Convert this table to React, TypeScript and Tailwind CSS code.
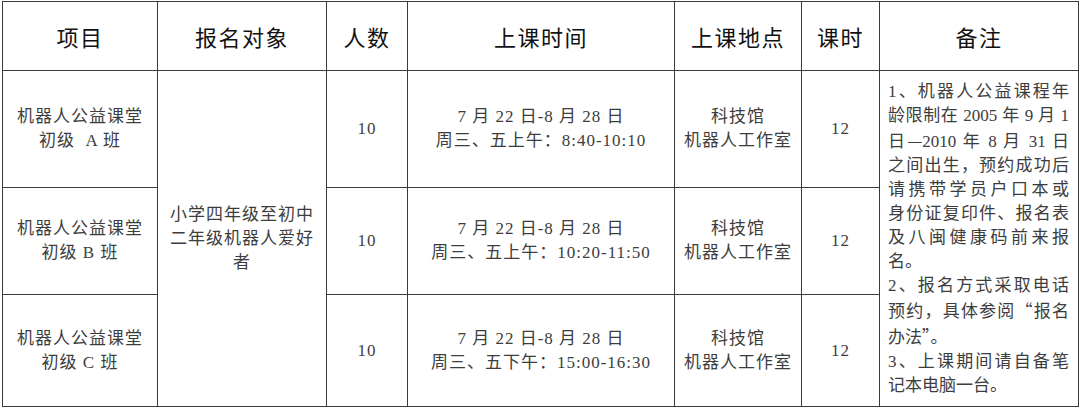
import React from "react";

const serif = "font-['Liberation_Serif','Noto_Sans_CJK_SC',serif]";
const sans = "font-['Noto_Sans_CJK_SC','Liberation_Sans',sans-serif]";

const headers = ["项目", "报名对象", "人数", "上课时间", "上课地点", "课时", "备注"];

const rows = [
  { cls: "初级\u00a0\u00a0A 班", time: "周三、五上午：8:40-10:10", h: "h-[117px]" },
  { cls: "初级 B 班", time: "周三、五上午：10:20-11:50", h: "h-[107px]" },
  { cls: "初级 C 班", time: "周三、五下午：15:00-16:30", h: "h-[112px]" },
];

// [text, justified]
const notes: [React.ReactNode, boolean][] = [
  ["1、机器人公益课程年", true],
  ["龄限制在 2005 年 9 月 1", true],
  [<><span className={sans}>日—</span>2010 年 8 月 31 日</>, true],
  ["之间出生，预约成功后", true],
  ["请携带学员户口本或", true],
  ["身份证复印件、报名表", true],
  ["及八闽健康码前来报", true],
  ["名。", false],
  ["2、报名方式采取电话", true],
  [<>预约，具体参阅<span className={sans}>“</span>报名</>, true],
  [<>办法<span className={sans}>”</span>。</>, false],
  ["3、上课期间请自备笔", true],
  ["记本电脑一台。", false],
];

export default function App() {
  const cell = "border border-[#3a3a3a] text-center align-middle p-0";
  const body = `${serif} text-[17px] leading-[24px] tracking-[1px] text-[#3d3d3d]`;

  return (
    <div className="w-[1080px] h-[409px] bg-white pt-[1px] pl-[2px]">
      <table className="table-fixed border-collapse w-[1076px]">
        <colgroup>
          <col className="w-[155px]" />
          <col className="w-[169px]" />
          <col className="w-[81px]" />
          <col className="w-[267px]" />
          <col className="w-[127px]" />
          <col className="w-[78px]" />
          <col className="w-[199px]" />
        </colgroup>
        <thead>
          <tr className="h-[69px]">
            {headers.map((t) => (
              <th
                key={t}
                className={`${cell} ${sans} text-[22px] tracking-[1.5px] font-normal text-[#111]`}
              >
                {t}
              </th>
            ))}
          </tr>
        </thead>
        <tbody>
          {rows.map((r, i) => (
            <tr key={i} className={r.h}>
              <td className={`${cell} ${body}`}>
                <div>机器人公益课堂</div>
                <div>{r.cls}</div>
              </td>
              {i === 0 && (
                <td rowSpan={3} className={`${cell} ${body}`}>
                  <div>小学四年级至初中</div>
                  <div>二年级机器人爱好</div>
                  <div>者</div>
                </td>
              )}
              <td className={`${cell} ${body}`}>10</td>
              <td className={`${cell} ${body}`}>
                <div>7 月 22 日-8 月 28 日</div>
                <div>{r.time}</div>
              </td>
              <td className={`${cell} ${body}`}>
                <div>科技馆</div>
                <div>机器人工作室</div>
              </td>
              <td className={`${cell} ${body}`}>12</td>
              {i === 0 && (
                <td
                  rowSpan={3}
                  className={`${cell} ${serif} text-[17px] leading-[24px] text-[#3d3d3d] text-left pl-[8px] pr-[9px]`}
                >
                  {notes.map(([t, j], k) => (
                    <div
                      key={k}
                      className={
                        j
                          ? "whitespace-nowrap text-justify [text-align-last:justify]"
                          : "whitespace-nowrap text-left"
                      }
                    >
                      {t}
                    </div>
                  ))}
                </td>
              )}
            </tr>
          ))}
        </tbody>
      </table>
    </div>
  );
}
